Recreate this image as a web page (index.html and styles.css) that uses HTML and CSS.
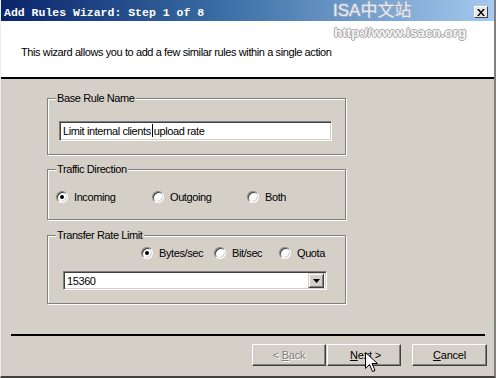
FILE: index.html
```html
<!DOCTYPE html>
<html lang="en">
<head>
    <meta charset="UTF-8">
    <title>Add Rules Wizard</title>
    <link rel="stylesheet" href="styles.css">
</head>
<body>
    <div class="window">
        <div class="titlebar">
            <span class="title">Add Rules Wizard: Step 1 of 8</span>
            <span class="close">
                <svg width="8" height="7" viewBox="0 0 8 7"><path d="M0 0h2l2 2.5 2-2.5h2L5 3.5 8 7H6L4 4.5 2 7H0l3-3.5z" fill="#000"/></svg>
            </span>
        </div>
        <div class="header">
            <p>This wizard allows you to add a few similar rules within a single action</p>
        </div>
        <div class="header-rule"></div>

        <div class="content">
            <fieldset class="group group-name">
                <legend>Base Rule Name</legend>
                <div class="textbox">Limit internal clients<span class="caret"></span>upload rate</div>
            </fieldset>

            <fieldset class="group group-direction">
                <legend>Traffic Direction</legend>
                <div class="radio-row">
                    <label class="radio"><span class="dot checked"></span>Incoming</label>
                    <label class="radio"><span class="dot"></span>Outgoing</label>
                    <label class="radio"><span class="dot"></span>Both</label>
                </div>
            </fieldset>

            <fieldset class="group group-rate">
                <legend>Transfer Rate Limit</legend>
                <div class="unit-row">
                    <label class="radio"><span class="dot checked"></span>Bytes/sec</label>
                    <label class="radio"><span class="dot"></span>Bit/sec</label>
                    <label class="radio"><span class="dot"></span>Quota</label>
                </div>
                <div class="combo">
                    <span class="combo-value">15360</span>
                    <span class="combo-button">
                        <svg width="7" height="4" viewBox="0 0 7 4"><path d="M0 0h7L3.5 4z" fill="#000"/></svg>
                    </span>
                </div>
            </fieldset>
        </div>

        <div class="footer">
            <div class="separator"></div>
            <div class="buttons">
                <button class="button disabled">&lt; <u>B</u>ack</button>
                <button class="button">&nbsp;<u>N</u>ext &gt;</button>
                <button class="button cancel"><u>C</u>ancel</button>
            </div>
        </div>

        <div class="watermark">
            <div class="wm-title">ISA中文站</div>
            <div class="wm-url">http://www.isacn.org</div>
        </div>

        <svg class="cursor" width="13" height="21" viewBox="0 0 13 21">
            <path d="M0.5 0.5v16l4-4 3 7 2.5-1-3-7h5.5z" fill="#fff" stroke="#000" stroke-width="1"/>
        </svg>
    </div>
</body>
</html>
```

FILE: styles.css
```css
body {
    margin: 0;
    font-family: "Liberation Sans", Arial, sans-serif;
    font-size: 11px;
    letter-spacing: -0.4px;
    color: #000;
}
.window {
    position: relative;
    width: 496px;
    height: 378px;
    box-sizing: border-box;
    background-color: #d4d0c8;
    border-left: 1px solid #eeeeee;
    border-right: 2px solid #808080;
    border-bottom: 2px solid #404040;
    overflow: hidden;
    display: flex;
    flex-direction: column;
}
.titlebar {
    height: 21px;
    display: flex;
    align-items: center;
    justify-content: space-between;
    padding: 0 6px 0 3px;
    background: linear-gradient(to right, #0a246a, #3a6ea5 45%, #a6caf0);
}
.title {
    font-family: "Liberation Mono", monospace;
    font-weight: bold;
    font-size: 11.5px;
    letter-spacing: 0;
    color: #fff;
    margin-top: 3px;
}
.close {
    width: 12px;
    height: 10px;
    display: flex;
    align-items: center;
    justify-content: center;
    background-color: #e8e8e8;
    border: 1px solid;
    border-color: #fff #404040 #404040 #fff;
    margin-top: 3px;
}
.header {
    height: 56px;
    background-color: #fff;
    display: flex;
    align-items: center;
    padding: 5px 0 0 20px;
    box-sizing: border-box;
}
.header p {
    margin: 0;
}
.header-rule {
    height: 2px;
    background-color: #000;
}
.content {
    padding-left: 46px;
}
.group {
    width: 299px;
    box-sizing: border-box;
    margin: 0;
    padding-left: 0;
    padding-right: 0;
    border: 1px solid #808080;
    box-shadow: inset 1px 1px 0 #fff, 1px 1px 0 #fff;
    min-width: 0;
}
.group legend {
    line-height: 14px;
    padding: 0 1px;
    margin-left: 8px;
    background-color: #d4d0c8;
}
.group-name {
    margin-top: 12px;
    padding-top: 16px;
    padding-bottom: 13px;
}
.group-direction {
    margin-top: 7px;
    padding-top: 14px;
    padding-bottom: 15px;
}
.group-rate {
    margin-top: 8px;
    padding-top: 4px;
    padding-bottom: 13px;
}
.textbox {
    width: 273px;
    height: 20px;
    margin-left: 11px;
    box-sizing: border-box;
    background-color: #fff;
    border: 1px solid;
    border-color: #808080 #fff #fff #808080;
    box-shadow: inset 1px 1px 0 #404040, inset -1px -1px 0 #d4d0c8;
    padding: 2px 3px;
    line-height: 14px;
    white-space: nowrap;
}
.caret {
    display: inline-block;
    width: 1px;
    height: 13px;
    background-color: #000;
    vertical-align: -2px;
    margin: 0 1px;
}
.radio-row {
    display: grid;
    grid-template-columns: 96px 95px auto;
    margin-left: 8px;
    height: 14px;
}
.radio {
    display: flex;
    align-items: center;
    gap: 6px;
    line-height: 14px;
}
.dot {
    position: relative;
    flex: none;
    width: 12px;
    height: 12px;
    box-sizing: border-box;
    border-radius: 50%;
    background-color: #fff;
    border: 1px solid;
    border-color: #808080 #fff #fff #808080;
    box-shadow: inset 1px 1px 0 #404040, inset -1px -1px 0 #d4d0c8;
}
.dot.checked::after {
    content: "";
    position: absolute;
    left: 3px;
    top: 3px;
    width: 4px;
    height: 4px;
    border-radius: 50%;
    background-color: #000;
}
.unit-row {
    display: grid;
    grid-template-columns: 73px 65px auto;
    margin-left: 93px;
    height: 14px;
}
.combo {
    width: 264px;
    height: 19px;
    margin: 11px 0 0 15px;
    box-sizing: border-box;
    background-color: #fff;
    border: 1px solid;
    border-color: #808080 #fff #fff #808080;
    box-shadow: inset 1px 1px 0 #404040, inset -1px -1px 0 #d4d0c8;
    display: flex;
    align-items: center;
    justify-content: space-between;
    padding: 1px 2px 1px 3px;
}
.combo-button {
    width: 16px;
    height: 15px;
    box-sizing: border-box;
    display: flex;
    align-items: center;
    justify-content: center;
    background-color: #d4d0c8;
    border: 1px solid;
    border-color: #d4d0c8 #404040 #404040 #d4d0c8;
    box-shadow: inset 1px 1px 0 #fff, inset -1px -1px 0 #808080;
}
.footer {
    padding-top: 30px;
}
.separator {
    height: 2px;
    margin: 0 9px 0 10px;
    background-color: #000;
}
.buttons {
    display: flex;
    justify-content: flex-end;
    margin-top: 8px;
    padding-right: 7px;
}
.button {
    width: 74px;
    height: 22px;
    margin: 0;
    padding: 0;
    font-family: "Liberation Sans", Arial, sans-serif;
    font-size: 11px;
    letter-spacing: -0.2px;
    color: #000;
    background-color: #d4d0c8;
    border: 1px solid;
    border-color: #fff #404040 #404040 #fff;
    box-shadow: inset -1px -1px 0 #808080;
}
.button + .button {
    margin-left: 1px;
}
.button.cancel {
    width: 75px;
    margin-left: 11px;
}
.button.disabled {
    color: #808080;
    text-shadow: 1px 1px 0 #fff;
}
.watermark {
    position: absolute;
    left: 330px;
    top: 0;
    letter-spacing: 0;
    color: #e4ecf8;
    text-shadow: 1px 0 0 #9aa8bc, -1px 0 0 #9aa8bc, 0 1px 0 #9aa8bc, 0 -1px 0 #9aa8bc;
}
.wm-title {
    font-family: "Liberation Sans", "Noto Sans CJK SC", sans-serif;
    font-size: 17px;
    line-height: 21px;
    padding-left: 2px;
}
.wm-url {
    font-family: "Liberation Sans", sans-serif;
    font-weight: bold;
    font-size: 13.5px;
    line-height: 20px;
    margin-top: 2px;
    padding-left: 3px;
    color: #f6f6f6;
    text-shadow: 1px 0 0 #a8a8a8, -1px 0 0 #a8a8a8, 0 1px 0 #a8a8a8, 0 -1px 0 #a8a8a8;
}
.cursor {
    position: absolute;
    left: 364px;
    top: 352px;
}
```
